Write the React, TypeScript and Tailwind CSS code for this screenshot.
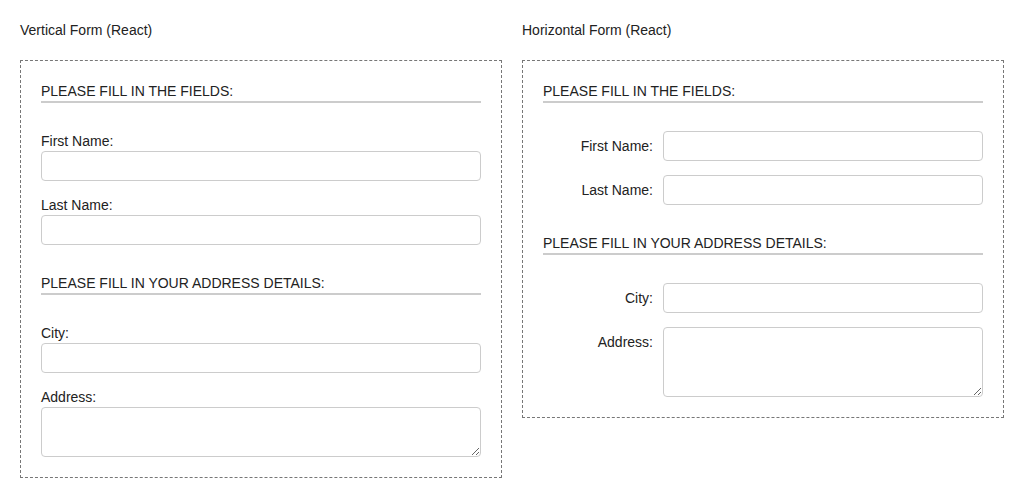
import React from "react";

const font = { fontFamily: '"Liberation Sans", Arial, sans-serif' };

function Heading({ children, first }: { children: React.ReactNode; first?: boolean }) {
  return (
    <div
      className={`${first ? "" : "mt-7"} text-sm leading-5 text-[#222] border-b-2 border-[#ccc]`}
    >
      {children}
    </div>
  );
}

function VField({ label, area, first }: { label: string; area?: boolean; first?: boolean }) {
  return (
    <div className={first ? "mt-7" : "mt-[14px]"}>
      <label className="block text-sm leading-5 text-[#222]">{label}</label>
      {area ? (
        <textarea className="block w-full h-[50px] border border-[#ccc] rounded-[4px] bg-white" />
      ) : (
        <input type="text" className="block w-full h-[30px] border border-[#ccc] rounded-[4px] bg-white" />
      )}
    </div>
  );
}

function HField({ label, area, first }: { label: string; area?: boolean; first?: boolean }) {
  return (
    <div className={`${first ? "mt-7" : "mt-[14px]"} flex items-start gap-[10px]`}>
      <label className="w-[110px] shrink-0 text-right text-sm leading-5 pt-[5px] text-[#222]">
        {label}
      </label>
      {area ? (
        <textarea className="block flex-1 h-[70px] border border-[#ccc] rounded-[4px] bg-white" />
      ) : (
        <input type="text" className="block flex-1 h-[30px] border border-[#ccc] rounded-[4px] bg-white" />
      )}
    </div>
  );
}

export default function App() {
  return (
    <div className="flex items-start gap-5 p-5 bg-white" style={font}>
      <div className="flex-1">
        <h2 className="text-sm leading-5 text-[#222]">Vertical Form (React)</h2>
        <form className="mt-5 border border-dashed border-[#777] p-5">
          <Heading first>PLEASE FILL IN THE FIELDS:</Heading>
          <VField label="First Name:" first />
          <VField label="Last Name:" />
          <Heading>PLEASE FILL IN YOUR ADDRESS DETAILS:</Heading>
          <VField label="City:" first />
          <VField label="Address:" area />
        </form>
      </div>
      <div className="flex-1">
        <h2 className="text-sm leading-5 text-[#222]">Horizontal Form (React)</h2>
        <form className="mt-5 border border-dashed border-[#777] p-5">
          <Heading first>PLEASE FILL IN THE FIELDS:</Heading>
          <HField label="First Name:" first />
          <HField label="Last Name:" />
          <Heading>PLEASE FILL IN YOUR ADDRESS DETAILS:</Heading>
          <HField label="City:" first />
          <HField label="Address:" area />
        </form>
      </div>
    </div>
  );
}
